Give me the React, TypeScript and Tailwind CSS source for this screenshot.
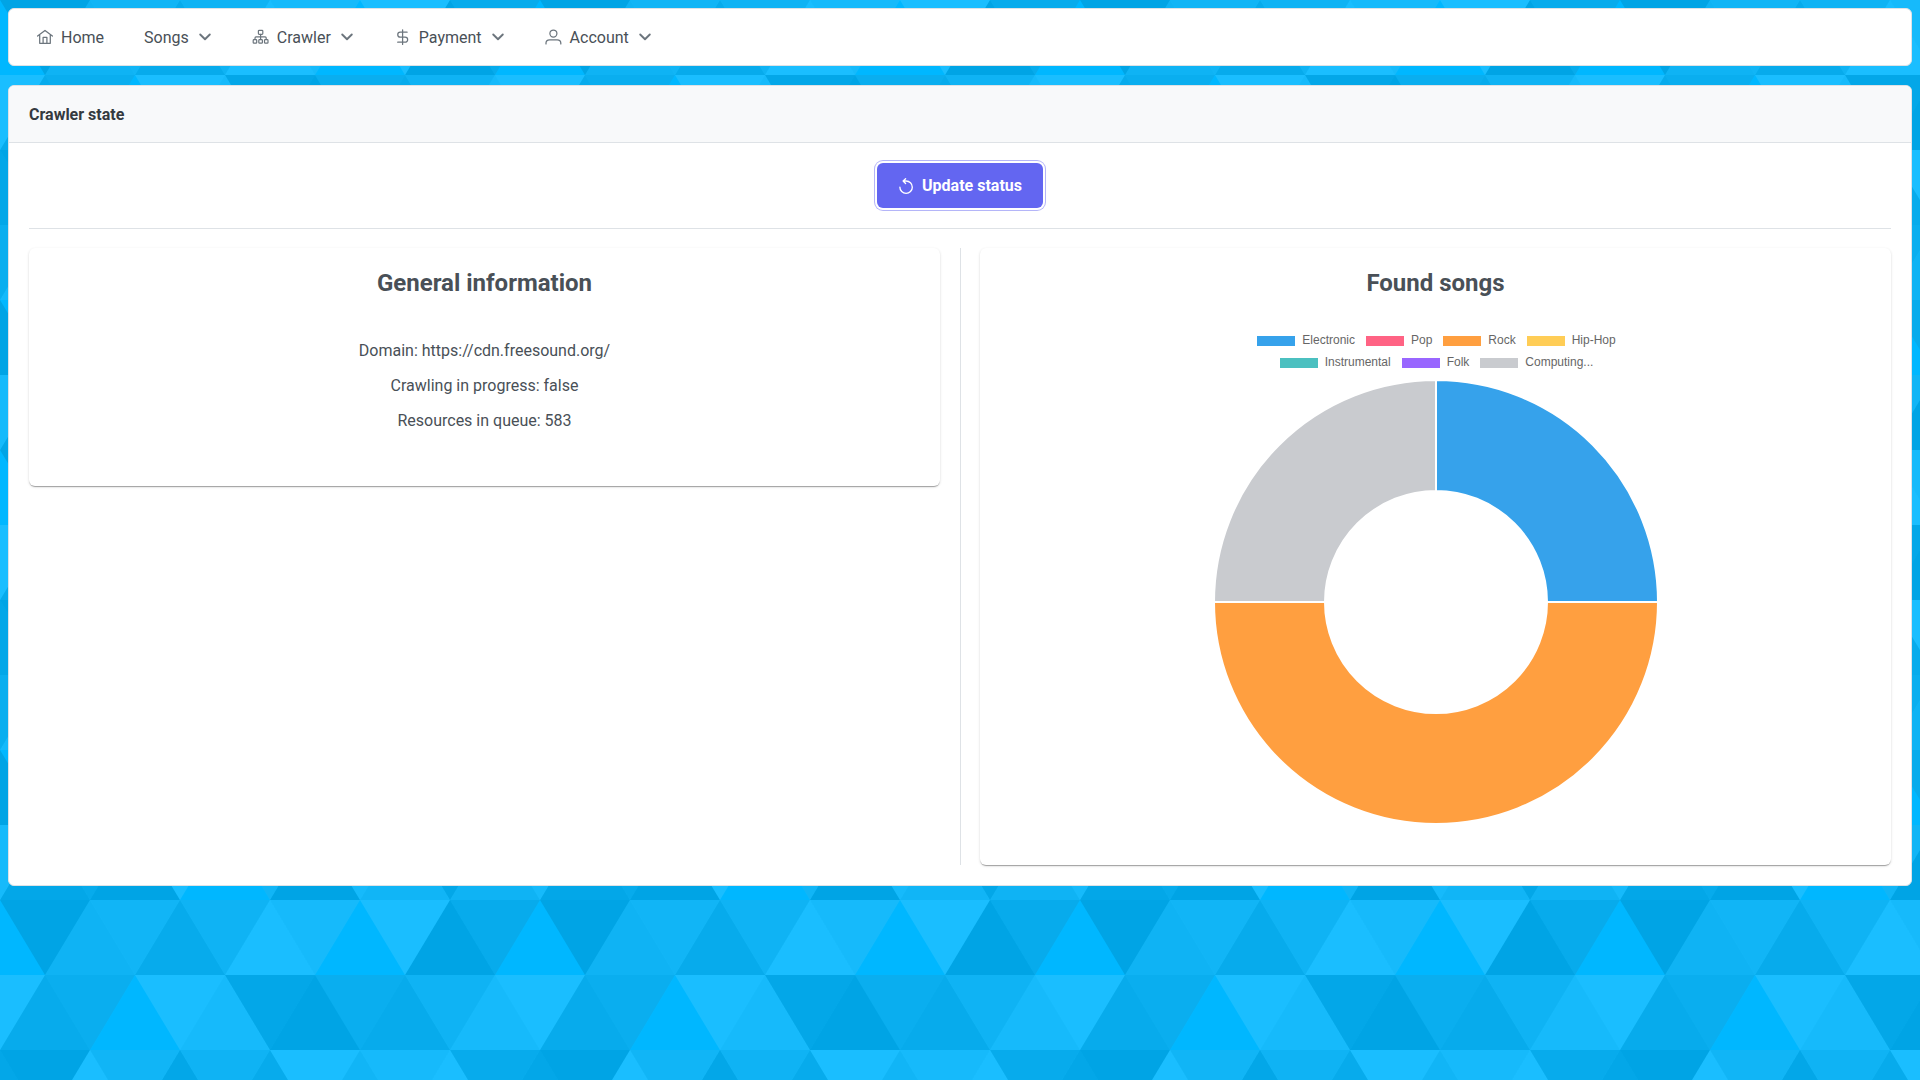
import React from "react";

type Tri = string | null;

const K = "#000";
const NONE = null;

// Each row lists the triangles pointing up, then the ones pointing down, left to right.
// Even rows have vertices at multiples of 90 on top, odd rows are shifted by 45.
const rows: { up: Tri[]; down: Tri[] }[] = [
  { up: [NONE, "#999", "#444", "#fff", NONE, K], down: [K, "#aaa", "#999", "#ddd", "#fff", "#444"] },
  { up: ["#444", NONE, "#ddd", K, "#444", "#ddd"], down: ["#fff", "#666", "#fff", "#222", "#666", "#999"] },
  { up: ["#222", "#fff", "#222", "#444", "#aaa", "#fff"], down: [K, "#aaa", "#999", "#fff", "#ddd", "#444"] },
  { up: ["#ddd", "#666", "#ddd", "#999", K, "#aaa"], down: ["#666", "#444", "#666", "#666", "#222", "#fff"] },
  { up: [K, "#ddd", "#222", NONE, "#999", "#444"], down: [NONE, "#ddd", K, "#444", "#666", "#999"] },
  { up: ["#222", K, NONE, K, "#aaa", "#999"], down: ["#ddd", "#444", "#fff", "#aaa", "#ddd", "#222"] },
];

function Backdrop() {
  return (
    <svg className="absolute inset-0 -z-10 h-full w-full" aria-hidden="true">
      <defs>
        <pattern id="triangles" width="540" height="450" patternUnits="userSpaceOnUse">
          <rect width="540" height="450" fill="#00b7ff" />
          <g fillOpacity="0.1">
            {rows.map((row, r) => {
              const top = r * 75;
              const bottom = top + 75;
              const odd = r % 2 === 1;
              const out: React.ReactNode[] = [];
              const put = (cx: number, up: boolean, fill: Tri, key: string) => {
                if (!fill) return;
                const apex = up ? top : bottom;
                const base = up ? bottom : top;
                const at = (x: number, k: string) =>
                  out.push(<polygon key={k} fill={fill} points={`${x},${apex} ${x - 45},${base} ${x + 45},${base}`} />);
                at(cx, key);
                if (cx === 0) at(540, key + "w");
              };
              row.up.forEach((f, i) => put(i * 90 + (odd ? 45 : 0), true, f, `u${i}`));
              row.down.forEach((f, i) => put(i * 90 + (odd ? 0 : 45), false, f, `d${i}`));
              return <g key={r}>{out}</g>;
            })}
          </g>
        </pattern>
      </defs>
      <rect width="100%" height="100%" fill="url(#triangles)" />
    </svg>
  );
}

const stroke = {
  fill: "none",
  stroke: "currentColor",
  strokeWidth: 1.25,
  strokeLinecap: "round" as const,
  strokeLinejoin: "round" as const,
};

function HomeIcon() {
  return (
    <svg className="size-4 text-[#6c757d]" viewBox="0 0 16 16" {...stroke}>
      <path d="M0.6 7.1 8 1.5l7.4 5.6M2.7 5.8v8.500h10.600V5.800M6.100 14.200V8.300h3.800v5.900" />
    </svg>
  );
}

function SitemapIcon() {
  return (
    <svg className="size-4 overflow-visible text-[#6c757d]" viewBox="0.4 0 16 16" {...stroke} strokeWidth={1.2}>
      <rect x="5.8" y="1.3" width="4.4" height="4" rx="0.8" />
      <rect x="0.6" y="10.6" width="3.5" height="3.6" rx="0.8" />
      <rect x="6.2" y="10.6" width="3.6" height="3.6" rx="0.8" />
      <rect x="11.9" y="10.6" width="3.5" height="3.6" rx="0.8" />
      <path d="M8 5.400v5M2.400 10.400V8.900q0-1 1-1h9.200q1 0 1 1v1.500" />
    </svg>
  );
}

function DollarIcon() {
  return (
    <svg className="size-4 text-[#6c757d]" viewBox="0 0 16 16" {...stroke}>
      <path d="M7.600 .8v14.700M12.100 3.200H5.200a2.450 2.450 0 0 0 0 4.900h4.900a2.550 2.550 0 0 1 0 5.100H2.700" />
    </svg>
  );
}

function UserIcon() {
  return (
    <svg className="size-4 overflow-visible text-[#6c757d]" viewBox="0.6 0 16 16" {...stroke}>
      <circle cx="8" cy="4.5" r="3.5" />
      <path d="M.6 14.900v-.8c0-2 1.600-3.300 3.600-3.300h7.600c2 0 3.600 1.300 3.600 3.300v.8" />
    </svg>
  );
}

function RefreshIcon() {
  return (
    <svg className="size-4 overflow-visible" viewBox="-0.4 0.4 16 16" {...stroke} strokeWidth={1.35}>
      <path d="M1.500 9.600a6.200 6.200 0 1 0 6.200-6.200H4.700M7.200 1.100 4.700 3.400l2.500 2.500" />
    </svg>
  );
}

function Chevron() {
  return (
    <svg className="ml-2 size-4 text-[#6c757d]" viewBox="0 0 16 16" {...stroke} strokeWidth={1.9}>
      <path d="M3.200 5.500 8 10.200l4.800-4.700" />
    </svg>
  );
}

function MenuItem({ icon, label, menu = true }: { icon?: React.ReactNode; label: string; menu?: boolean }) {
  return (
    <a className="flex h-[42px] items-center px-5 text-[#495057]">
      {icon && <span className="mr-2">{icon}</span>}
      <span className="pt-0.5 leading-4">{label}</span>
      {menu && <Chevron />}
    </a>
  );
}

const cardShadow =
  "rounded-md bg-white shadow-[0_2px_1px_-1px_rgba(0,0,0,0.2),0_1px_1px_0_rgba(0,0,0,0.14),0_1px_3px_0_rgba(0,0,0,0.12)]";

const legend = [
  [
    { label: "Electronic", swatch: "bg-[#36a2eb]" },
    { label: "Pop", swatch: "bg-[#ff6384]" },
    { label: "Rock", swatch: "bg-[#ff9f40]" },
    { label: "Hip-Hop", swatch: "bg-[#ffcd56]" },
  ],
  [
    { label: "Instrumental", swatch: "bg-[#4bc0c0]" },
    { label: "Folk", swatch: "bg-[#9966ff]" },
    { label: "Computing...", swatch: "bg-[#c9cbcf]" },
  ],
];

function Doughnut() {
  return (
    <svg className="mx-auto mt-1.5 block h-[446px] w-[446px]" viewBox="-223 -223 446 446">
      <g stroke="#fff" strokeWidth="2" strokeLinejoin="bevel">
        <path fill="#36a2eb" d="M0-222A222 222 0 0 1 222 0H111A111 111 0 0 0 0-111Z" />
        <path fill="#ff9f40" d="M222 0A222 222 0 0 1-222 0H-111A111 111 0 0 0 111 0Z" />
        <path fill="#c9cbcf" d="M-222 0A222 222 0 0 1 0-222V-111A111 111 0 0 0-111 0Z" />
      </g>
    </svg>
  );
}

export default function App() {
  return (
    <div className="relative isolate h-[1080px] w-full overflow-hidden p-2 font-['Roboto',sans-serif] text-base text-[#495057]">
      <Backdrop />
      <nav className="flex h-[58px] items-center rounded-md border border-[#dee2e6] bg-white px-2">
        <MenuItem icon={<HomeIcon />} label="Home" menu={false} />
        <MenuItem label="Songs" />
        <MenuItem icon={<SitemapIcon />} label="Crawler" />
        <MenuItem icon={<DollarIcon />} label="Payment" />
        <MenuItem icon={<UserIcon />} label="Account" />
      </nav>

      <main className="mt-[19px] h-[801px] rounded-md border border-[#dee2e6] bg-white">
        <header className="flex h-[57px] items-center rounded-t-[5px] border-b border-[#dee2e6] bg-[#f8f9fa] px-5 pt-0.5 font-bold text-[#343a40]">
          Crawler state
        </header>
        <div className="px-5 pt-5">
          <div className="flex justify-center">
            <button className="flex h-[45px] w-[166px] items-center justify-center gap-2 rounded-md bg-[#6366f1] font-bold text-white shadow-[0_0_0_2px_#fff,0_0_0_3px_#b4b5f8]">
              <RefreshIcon />
              Update status
            </button>
          </div>
          <hr className="mt-5 border-[#dee2e6]" />
          <div className="mt-[19px] flex items-start">
            <section className={`${cardShadow} h-[238px] flex-1 pt-[21px] text-center`}>
              <h2 className="text-2xl leading-[29px] font-bold">General information</h2>
              <div className="mt-[43px] flex flex-col gap-4 leading-[19px]">
                <p>Domain: https://cdn.freesound.org/</p>
                <p>Crawling in progress: false</p>
                <p>Resources in queue: 583</p>
              </div>
            </section>
            <div className="mr-[19px] ml-5 h-[617px] w-px bg-[#dee2e6]" />
            <section className={`${cardShadow} h-[617px] flex-1 pt-[21px] text-center`}>
              <h2 className="text-2xl leading-[29px] font-bold">Found songs</h2>
              <div className="pl-px">
                <div className="mt-[31px] font-['Liberation_Sans',sans-serif] text-xs text-[#666]">
                  {legend.map((line, i) => (
                    <div key={i} className="flex h-[22px] items-center justify-center gap-[10px]">
                      {line.map((item) => (
                        <div key={item.label} className="flex items-center gap-1.5">
                          <span className={`mx-px mt-px h-[10px] w-[38px] ${item.swatch}`} />
                          <span className="leading-[14px]">{item.label}</span>
                        </div>
                      ))}
                    </div>
                  ))}
                </div>
                <Doughnut />
              </div>
            </section>
          </div>
        </div>
      </main>
    </div>
  );
}
